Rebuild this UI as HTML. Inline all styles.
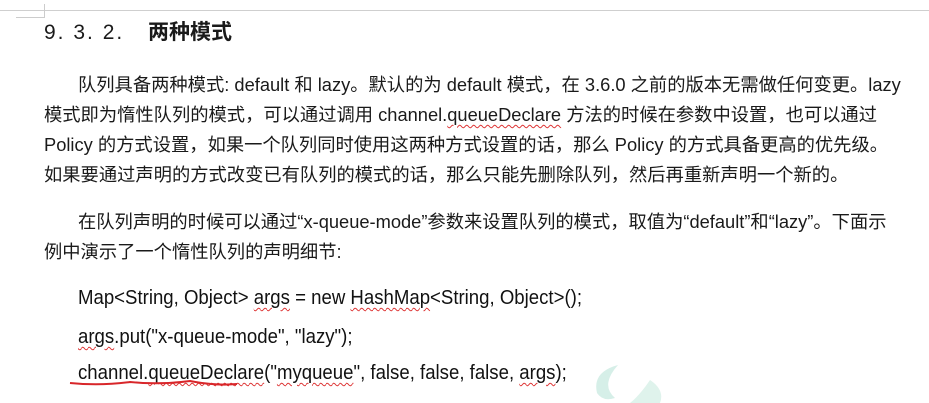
<!DOCTYPE html>
<html><head><meta charset="utf-8"><style>
html,body{margin:0;padding:0;background:#fff;width:929px;height:403px;overflow:hidden;position:relative}
.l{position:absolute;white-space:nowrap;font-family:"Liberation Sans","Noto Sans CJK SC",sans-serif;font-size:18.3px;color:#1a1a1a;line-height:20px}
.c{position:absolute;white-space:nowrap;font-family:"Liberation Sans",sans-serif;font-size:20px;color:#111;transform-origin:0 0;transform:scaleX(0.93);line-height:22px}
.w{text-decoration:underline wavy #d33;text-decoration-thickness:1px;text-underline-offset:3px}
</style></head><body>
<div style="position:absolute;left:0;top:10px;width:929px;height:1px;background:#cfcfcf"></div>
<div style="position:absolute;left:16px;top:4px;width:28px;height:13px;border-right:1px solid #ccc;border-bottom:1px solid #ccc"></div>
<div class="l" style="left:44px;top:21px;font-size:21px;line-height:24px;letter-spacing:2px">9. 3. 2.</div>
<div class="l" style="left:148px;top:21px;font-size:21px;font-weight:bold;line-height:24px">两种模式</div>
<div class="l" style="left:78px;top:75px">队列具备两种模式: default 和 lazy。默认的为 default 模式，在 3.6.0 之前的版本无需做任何变更。lazy</div>
<div class="l" style="left:44px;top:105px">模式即为惰性队列的模式，可以通过调用 channel.<span class="w">queueDeclare</span> 方法的时候在参数中设置，也可以通过</div>
<div class="l" style="left:44px;top:135px">Policy 的方式设置，如果一个队列同时使用这两种方式设置的话，那么 Policy 的方式具备更高的优先级。</div>
<div class="l" style="left:44px;top:165px">如果要通过声明的方式改变已有队列的模式的话，那么只能先删除队列，然后再重新声明一个新的。</div>
<div class="l" style="left:78px;top:212px">在队列声明的时候可以通过“x-queue-mode”参数来设置队列的模式，取值为“default”和“lazy”。下面示</div>
<div class="l" style="left:44px;top:242px">例中演示了一个惰性队列的声明细节:</div>
<div class="c" style="left:78px;top:287px">Map&lt;String, Object&gt; <span class="w">args</span> = new <span class="w">HashMap</span>&lt;String, Object&gt;();</div>
<div class="c" style="left:78px;top:326px"><span class="w">args</span>.put("x-queue-mode", "lazy");</div>
<div class="c" style="left:78px;top:362px">channel.<span class="w">queueDeclare</span>("<span class="w">myqueue</span>", false, false, false, <span class="w">args</span>);</div>
<svg style="position:absolute;left:0;top:0" width="929" height="403">
<path d="M70 383 Q100 386 130 382 Q160 385 190 381 Q215 386 237 384" stroke="#d8262a" stroke-width="2" fill="none"/>
<path d="M618 365 Q592 372 597 393 Q603 402 615 398 Q600 385 618 365Z" fill="#d6efe8"/>
<path d="M650 380 Q640 395 630 403 L660 403 Q665 390 650 380Z" fill="#dff3ec"/>
</svg>
</body></html>
